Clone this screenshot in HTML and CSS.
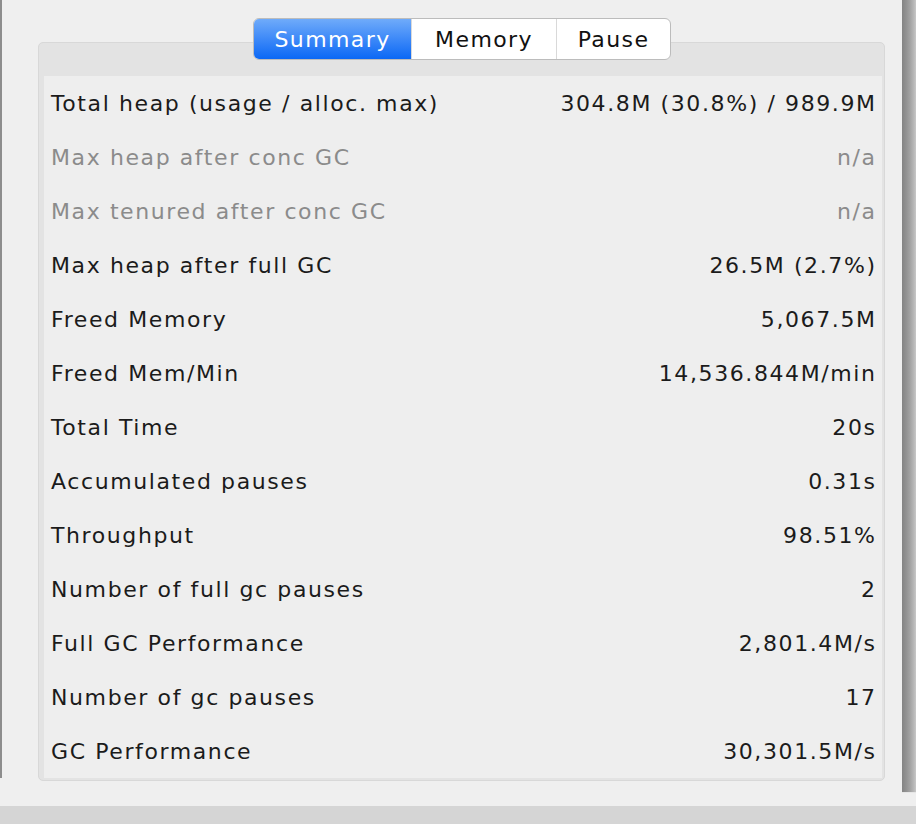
FILE: index.html
```html
<!DOCTYPE html>
<html>
<head>
<meta charset="utf-8">
<link rel="stylesheet" href="styles.css">
</head>
<body>
<div class="window">
  <div class="leftbar"></div>
  <div class="main">
    <div class="tabs">
      <div class="tab active">Summary</div>
      <div class="tab">Memory</div>
      <div class="tab">Pause</div>
    </div>
    <div class="panel">
      <div class="rows">
        <div class="row"><span>Total heap (usage / alloc. max)</span><span>304.8M (30.8%) / 989.9M</span></div>
        <div class="row dim"><span>Max heap after conc GC</span><span>n/a</span></div>
        <div class="row dim"><span>Max tenured after conc GC</span><span>n/a</span></div>
        <div class="row"><span>Max heap after full GC</span><span>26.5M (2.7%)</span></div>
        <div class="row"><span>Freed Memory</span><span>5,067.5M</span></div>
        <div class="row"><span>Freed Mem/Min</span><span>14,536.844M/min</span></div>
        <div class="row"><span>Total Time</span><span>20s</span></div>
        <div class="row"><span>Accumulated pauses</span><span>0.31s</span></div>
        <div class="row"><span>Throughput</span><span>98.51%</span></div>
        <div class="row"><span>Number of full gc pauses</span><span>2</span></div>
        <div class="row"><span>Full GC Performance</span><span>2,801.4M/s</span></div>
        <div class="row"><span>Number of gc pauses</span><span>17</span></div>
        <div class="row"><span>GC Performance</span><span>30,301.5M/s</span></div>
      </div>
    </div>
  </div>
  <div class="rightbar"></div>
</div>
<div class="bottom"></div>
</body>
</html>
```
FILE: styles.css
```css
html {
  margin: 0;
  padding: 0;
  overflow: hidden;
  background: #efefef;
}
body {
  margin: 0;
  padding: 0;
  height: 824px;
  background: #efefef;
  font-family: "DejaVu Sans", "Liberation Sans", sans-serif;
}
.window {
  display: flex;
  height: 806px;
}
.leftbar {
  width: 2px;
  height: 778px;
  background: #8d8d8d;
  flex: none;
}
.main {
  flex: 1 1 0;
  min-width: 0;
  display: flex;
  flex-direction: column;
  padding: 18px 17px 0 36px;
}
.rightbar {
  width: 14px;
  height: 792px;
  flex: none;
  background-color: #a0a0a0;
  background-image: linear-gradient(to right, #848484 0%, #929292 30%, #a4a4a4 60%, #b8b8b8 85%, #c8c8c8 100%);
  border-bottom: 1px solid #e6e6e6;
}
.tabs {
  align-self: center;
  display: flex;
  height: 40px;
  border: 1px solid #bcbcbc;
  border-radius: 6px;
  background: #ffffff;
  position: relative;
  z-index: 1;
  overflow: hidden;
  margin-left: 1px;
}
.tab {
  display: flex;
  align-items: center;
  justify-content: center;
  font-size: 22px;
  letter-spacing: 1.4px;
  color: #111;
  border-left: 1px solid #d9d9d9;
}
.tab:nth-child(1) { width: 157px; border-left: none; }
.tab:nth-child(2) { width: 144px; }
.tab:nth-child(3) { width: 113px; }
.tab.active {
  color: #fff;
  background: linear-gradient(to bottom, #6fabfa 0%, #3d89f8 50%, #0b68f5 100%);
}
.panel {
  margin-top: -18px;
  background: #e3e3e3;
  border: 1px solid #d8d8d8;
  border-radius: 5px;
  padding: 33px 2px 2px 5px;
}
.rows {
  background: #eeeeee;
  padding: 0 7px;
}
.row {
  height: 54px;
  display: flex;
  align-items: center;
  justify-content: space-between;
  font-size: 22px;
  letter-spacing: 1.6px;
  color: #1b1b1b;
}
.row span:last-child {
  margin-right: -1.6px;
}
.row.dim {
  color: #8b8b8b;
}
.bottom {
  height: 18px;
  background: #d5d5d5;
}
```
